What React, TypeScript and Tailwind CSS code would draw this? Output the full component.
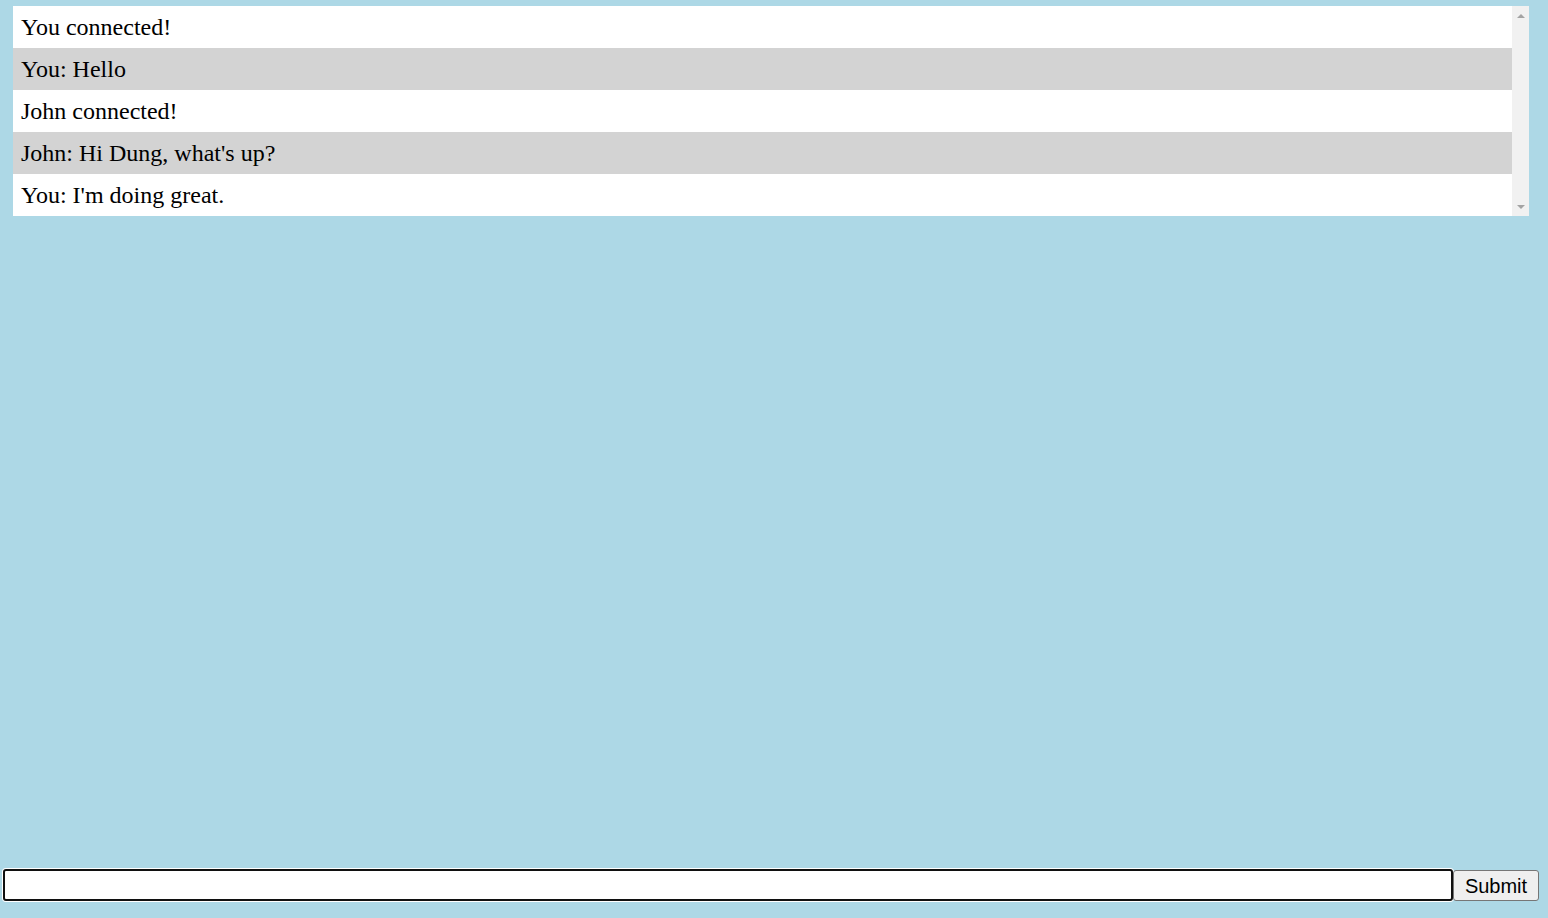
import React from 'react';

const messages = [
  'You connected!',
  'You: Hello',
  'John connected!',
  "John: Hi Dung, what's up?",
  "You: I'm doing great.",
];

export default function App() {
  return (
    <div className="h-screen flex flex-col bg-[#add8e6]">
      <div className="ml-[13px] mt-[6px] w-[1516px] h-[210px] flex bg-white">
        <ul className="flex-1 list-none m-0 p-0">
          {messages.map((m, i) => (
            <li
              key={i}
              className={`h-[42px] flex items-center px-[8px] text-[24px] text-black font-['Liberation_Serif',serif] ${
                i % 2 === 1 ? 'bg-[#d3d3d3]' : 'bg-white'
              }`}
            >
              {m}
            </li>
          ))}
        </ul>
        {/* scrollbar track */}
        <div className="w-[17px] bg-[#f1f1f1] flex flex-col items-center justify-between pt-[8px] pb-[7px]">
          <svg width="8" height="4" viewBox="0 0 8 4">
            <path d="M4 0L8 4H0z" fill="#a3a3a3" />
          </svg>
          <svg width="8" height="4" viewBox="0 0 8 4">
            <path d="M0 0H8L4 4z" fill="#a3a3a3" />
          </svg>
        </div>
      </div>
      <div className="flex-1" />
      <form className="flex items-center pl-[3px] pb-[17px]" onSubmit={(e) => e.preventDefault()}>
        <input
          type="text"
          className="w-[1450px] h-[32px] bg-white border-2 border-[#101010] rounded-[3px] shadow-[0_0_0_1px_white] outline-none px-1"
        />
        <button
          type="submit"
          className="w-[86px] h-[31px] bg-[#efefef] border border-[#767676] rounded-[3px] text-[20px] text-black font-['Liberation_Sans',Arial,sans-serif]"
        >
          Submit
        </button>
      </form>
    </div>
  );
}
